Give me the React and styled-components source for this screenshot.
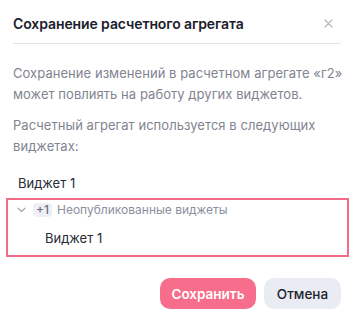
import React from "react";
import styled, { createGlobalStyle } from "styled-components";

const Global = createGlobalStyle`
  html, body { margin: 0; padding: 0; background: #ffffff; }
  body { font-family: Inter, "Noto Sans", sans-serif; -webkit-font-smoothing: antialiased; }
  * { box-sizing: border-box; }
`;

const Modal = styled.div`
  width: 356px;
  height: 324px;
  background: #fff;
  display: flex;
  flex-direction: column;
`;

const Header = styled.div`
  display: flex;
  align-items: center;
  justify-content: space-between;
  margin: 0 15px 0 13px;
  height: 44px;
  padding-top: 4px;
  border-bottom: 1px solid #e2e4eb;
`;

const Title = styled.h2`
  margin: 0;
  font-size: 14px;
  font-weight: 600;
  color: #1c202b;
  line-height: 20px;
  letter-spacing: -0.1px;
`;

const CloseBtn = styled.button`
  border: 0;
  background: none;
  padding: 0;
  width: 12px;
  height: 12px;
  margin-right: 7px;
  display: flex;
  align-items: center;
  justify-content: center;
  cursor: pointer;
`;

const Body = styled.div`
  padding: 0 12px 0 13px;
`;

const Text = styled.p`
  margin: ${(p) => p.$mt}px 0 0;
  font-size: 13px;
  line-height: 21px;
  color: #7f8490;
  letter-spacing: 0.05px;
`;

const Widget = styled.div`
  margin-top: 17px;
  padding-left: ${(p) => p.$indent}px;
  font-size: 13px;
  line-height: 18px;
  color: #272b36;
`;

const Group = styled.div`
  margin: 6px 7px 0 6px;
  height: 59px;
  border: 2px solid #f26b89;
  display: flex;
  flex-direction: column;
`;

const GroupHead = styled.div`
  display: flex;
  align-items: center;
  height: 20px;
  padding-left: 9px;
`;

const Badge = styled.span`
  margin-left: 7px;
  height: 14px;
  padding: 0 3px;
  border-radius: 4px;
  background: #eef0f5;
  color: #6b7080;
  font-size: 12px;
  line-height: 14px;
  font-weight: 500;
`;

const GroupLabel = styled.span`
  margin-left: 5px;
  font-size: 12px;
  color: #8b90a0;
  line-height: 14px;
`;

const GroupItem = styled.div`
  margin-top: 9px;
  padding-left: 37px;
  font-size: 13px;
  line-height: 18px;
  color: #272b36;
`;

const Footer = styled.div`
  display: flex;
  justify-content: flex-end;
  gap: 8px;
  margin: 21px 15px 0 0;
`;

const Button = styled.button`
  height: 31px;
  width: ${(p) => p.$w}px;
  border: 0;
  border-radius: 10px;
  font-family: inherit;
  font-size: 13.5px;
  font-weight: ${(p) => (p.$primary ? 600 : 500)};
  background: ${(p) => (p.$primary ? "#f66e8b" : "#e9ecf3")};
  color: ${(p) => (p.$primary ? "#ffffff" : "#1f2430")};
  cursor: pointer;
  padding: 0;
`;

export default function App() {
  return (
    <>
      <Global />
      <Modal>
        <Header>
          <Title>Сохранение расчетного агрегата</Title>
          <CloseBtn aria-label="close">
            <svg width="9" height="9" viewBox="0 0 9 9">
              <path d="M1 1L8 8M8 1L1 8" stroke="#b3b7c3" strokeWidth="1.2" strokeLinecap="round" />
            </svg>
          </CloseBtn>
        </Header>
        <Body>
          <Text $mt={19}>
            Сохранение изменений в расчетном агрегате «г2» может повлиять на работу других виджетов.
          </Text>
          <Text $mt={10}>Расчетный агрегат используется в следующих виджетах:</Text>
          <Widget $indent={5}>Виджет 1</Widget>
        </Body>
        <Group>
          <GroupHead>
            <svg width="9" height="6" viewBox="0 0 9 6">
              <path d="M1 1.2L4.5 4.5L8 1.2" fill="none" stroke="#a4a8b5" strokeWidth="1.2" strokeLinecap="round" strokeLinejoin="round" />
            </svg>
            <Badge>+1</Badge>
            <GroupLabel>Неопубликованные виджеты</GroupLabel>
          </GroupHead>
          <GroupItem>Виджет 1</GroupItem>
        </Group>
        <Footer>
          <Button $primary $w={96}>Сохранить</Button>
          <Button $w={77}>Отмена</Button>
        </Footer>
      </Modal>
    </>
  );
}
